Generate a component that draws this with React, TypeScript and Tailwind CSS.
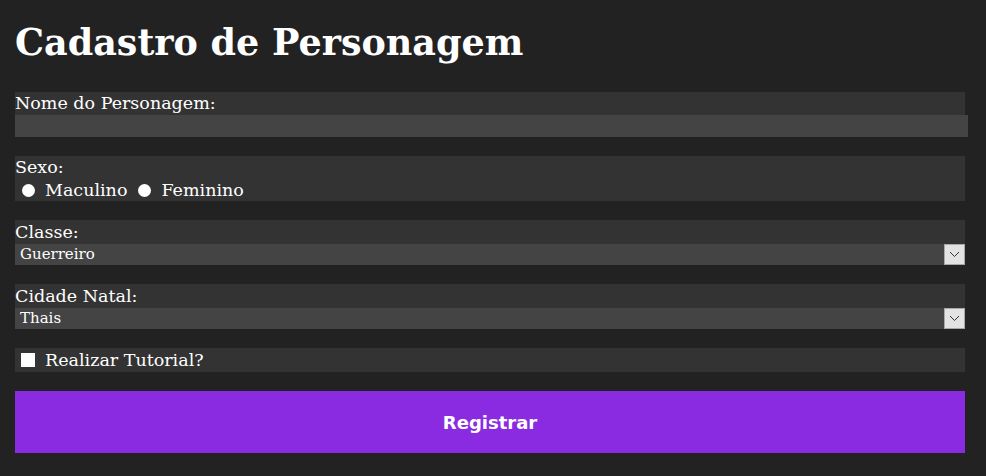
import { useState } from "react"

const serif = "font-['DejaVu_Serif',Georgia,serif]"

function Chevron() {
  return (
    <svg width="11" height="7" viewBox="0 0 11 7" fill="none">
      <path d="M1 1l4.5 4.5L10 1" stroke="#333" strokeWidth="1" />
    </svg>
  )
}

function SelectField({ label, options }: { label: string; options: string[] }) {
  const [value, setValue] = useState(options[0])
  return (
    <div className="bg-[#333333]">
      <label className="block h-[24px] text-[17.5px] leading-[24px]">{label}</label>
      <div className="relative h-[21px]">
        <select
          value={value}
          onChange={(e) => setValue(e.target.value)}
          className={`block h-[21px] w-full appearance-none bg-[#444444] pl-[5px] text-[15px] leading-[21px] text-white outline-none ${serif}`}
        >
          {options.map((o) => (
            <option key={o}>{o}</option>
          ))}
        </select>
        <div className="pointer-events-none absolute right-0 top-0 flex h-[21px] w-[21px] items-center justify-center border border-[#a8a8a8] bg-[#e3e3e3]">
          <Chevron />
        </div>
      </div>
    </div>
  )
}

export default function App() {
  const [sexo, setSexo] = useState("")
  const [tutorial, setTutorial] = useState(false)

  return (
    <div className={`min-h-[476px] bg-[#222222] px-[15px] pt-[15px] text-white ${serif}`}>
      <h1 className="mb-[24px] h-[53px] text-[36.5px] font-bold leading-[55px]">Cadastro de Personagem</h1>

      <form className="flex w-[950px] flex-col gap-[19px]" onSubmit={(e) => e.preventDefault()}>
        <div className="bg-[#333333]">
          <label className="block h-[23px] text-[17.5px] leading-[23px]">Nome do Personagem:</label>
          <input type="text" className="block h-[22px] w-[953px] bg-[#444444] text-white outline-none" />
        </div>

        <div className="bg-[#333333]">
          <div className="h-[23px] text-[17.5px] leading-[23px]">Sexo:</div>
          <div className="flex h-[22px] items-center text-[17.5px]">
            <label className="ml-[7px] flex items-center gap-[10px]">
              <input
                type="radio"
                name="sexo"
                checked={sexo === "m"}
                onChange={() => setSexo("m")}
                className="h-[13px] w-[13px] appearance-none rounded-full bg-white"
              />
              Maculino
            </label>
            <label className="ml-[11px] flex items-center gap-[10px]">
              <input
                type="radio"
                name="sexo"
                checked={sexo === "f"}
                onChange={() => setSexo("f")}
                className="h-[13px] w-[13px] appearance-none rounded-full bg-white"
              />
              Feminino
            </label>
          </div>
        </div>

        <SelectField label="Classe:" options={["Guerreiro", "Mago", "Arqueiro"]} />
        <SelectField label="Cidade Natal:" options={["Thais", "Carlin", "Venore"]} />

        <div className="flex h-[24px] items-center bg-[#333333] text-[17.5px]">
          <label className="ml-[6px] flex items-center gap-[10px]">
            <input
              type="checkbox"
              checked={tutorial}
              onChange={(e) => setTutorial(e.target.checked)}
              className="h-[14px] w-[14px] appearance-none bg-white"
            />
            Realizar Tutorial?
          </label>
        </div>

        <button
          type="submit"
          className="h-[62px] bg-[#8a2be2] font-['DejaVu_Sans',Tahoma,sans-serif] text-[18px] font-bold text-white"
        >
          Registrar
        </button>
      </form>
    </div>
  )
}
